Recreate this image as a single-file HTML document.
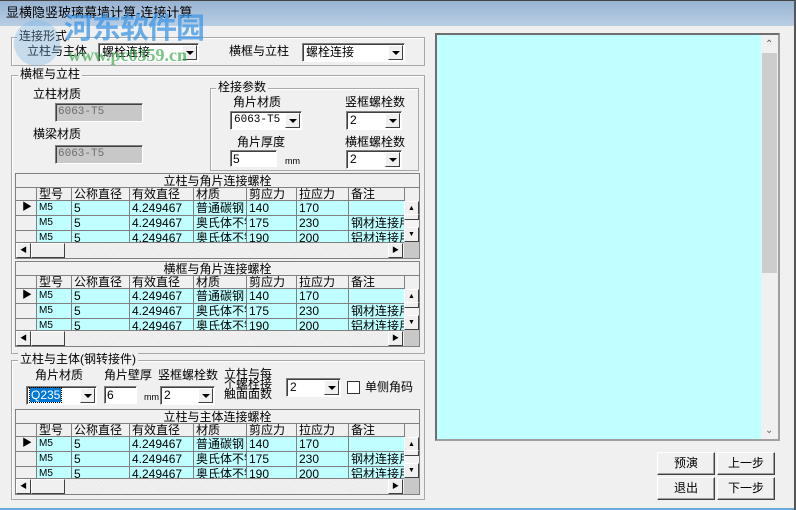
<!DOCTYPE html>
<html><head><meta charset="utf-8"><style>
*{box-sizing:border-box;margin:0;padding:0}
body{width:796px;height:510px;overflow:hidden;background:#f0f0f0;font-family:"Liberation Sans","WenQuanYi Zen Hei","Noto Sans CJK SC",sans-serif;font-size:12px;color:#000;position:relative}
.a{position:absolute;white-space:nowrap;line-height:13px}
.title{left:0;top:0;width:796px;height:26px;background:linear-gradient(#98b4d2,#b8cde4);border-top:1px solid #444;border-right:1px solid #333}
.grp{position:absolute;border:1px solid #a8a8a8;box-shadow:inset 1px 1px 0 #fff}
.gl{position:absolute;background:#f0f0f0;padding:0 2px;line-height:13px;white-space:nowrap}
.combo{position:absolute;background:#fff;border:1px solid;border-color:#808080 #fff #fff #808080;box-shadow:inset 1px 1px 0 #404040;padding:1px 3px;line-height:14px;font-size:12px}
.combo .btn{position:absolute;right:1px;top:1px;bottom:1px;width:15px;background:#f0f0f0;border:1px solid;border-color:#fff #404040 #404040 #fff}
.combo .btn:after{content:"";position:absolute;left:3px;top:5px;border:4px solid transparent;border-top:4px solid #000;border-bottom:0}
.tb{position:absolute;background:#fff;border:1px solid;border-color:#808080 #fff #fff #808080;box-shadow:inset 1px 1px 0 #404040;padding:1px 2px;line-height:14px}
.dis{background:#c8c8c8;color:#6d6d6d;font-family:"Liberation Mono",monospace;font-size:11px}
.grid{position:absolute;width:405px;height:86px;border:1px solid #808080;background:#f0f0f0;overflow:hidden}
.cap{position:absolute;left:0;top:0;width:403px;height:14px;text-align:center;line-height:14px;border-bottom:1px solid #808080}
.c{position:absolute;height:15px;border-right:1px solid #808080;border-bottom:1px solid #808080;line-height:14px;padding-left:2px;overflow:hidden;white-space:nowrap;font-size:12px}
.h{height:13px;line-height:12px;top:14px}
.cy{background:#c0ffff}
.vs{position:absolute;left:388px;top:27px;width:15px;height:41px;background:#f4f4f4}
.sb{position:absolute;background:#f0f0f0;border:1px solid;border-color:#fff #404040 #404040 #fff;width:15px;height:15px}
.hs{position:absolute;left:0;top:68px;width:388px;height:16px;background:repeating-linear-gradient(45deg,#f4f4f4 0 1px,#e8e8e8 1px 2px);border-top:1px solid #808080}
.corner{position:absolute;left:388px;top:68px;width:16px;height:17px;background:#c8c8c8}
.btn2{position:absolute;width:58px;height:23px;background:#f0f0f0;border:1px solid;border-color:#fff #404040 #404040 #fff;box-shadow:inset -1px -1px 0 #a0a0a0;text-align:center;line-height:21px}
</style></head><body>
<div class="a title"></div>
<div class="a" style="left:6px;top:6px;font-size:13px">显横隐竖玻璃幕墙计算-连接计算</div>
<div class="a" style="left:0;top:508px;width:796px;height:2px;background:#6aa8d8"></div>
<div class="a" style="left:794px;top:0;width:2px;height:510px;background:#555"></div>

<div class="grp" style="left:11px;top:37px;width:414px;height:29px"></div>
<div class="gl" style="left:17px;top:30px">连接形式</div>
<div class="a" style="left:27px;top:45px">立柱与主体</div>
<div class="combo" style="left:98px;top:43px;width:101px;height:19px">螺栓连接<div class="btn"></div></div>
<div class="a" style="left:229px;top:45px">横框与立柱</div>
<div class="combo" style="left:302px;top:43px;width:103px;height:19px">螺栓连接<div class="btn"></div></div>

<div class="grp" style="left:11px;top:75px;width:414px;height:279px"></div>
<div class="gl" style="left:18px;top:68px">横框与立柱</div>
<div class="a" style="left:33px;top:88px">立柱材质</div>
<div class="tb dis" style="left:55px;top:103px;width:88px;height:19px">6063-T5</div>
<div class="a" style="left:33px;top:128px">横梁材质</div>
<div class="tb dis" style="left:55px;top:145px;width:88px;height:19px">6063-T5</div>

<div class="grp" style="left:210px;top:88px;width:209px;height:83px"></div>
<div class="gl" style="left:216px;top:81px">栓接参数</div>
<div class="a" style="left:233px;top:96px">角片材质</div>
<div class="combo" style="left:230px;top:111px;width:72px;height:19px;font-family:'Liberation Mono',monospace;font-size:11px">6063-T5<div class="btn"></div></div>
<div class="a" style="left:345px;top:96px">竖框螺栓数</div>
<div class="combo" style="left:346px;top:111px;width:56px;height:19px">2<div class="btn"></div></div>
<div class="a" style="left:237px;top:136px">角片厚度</div>
<div class="tb" style="left:230px;top:150px;width:47px;height:17px">5</div>
<div class="a" style="left:285px;top:155px;font-size:9px">mm</div>
<div class="a" style="left:345px;top:136px">横框螺栓数</div>
<div class="combo" style="left:346px;top:150px;width:56px;height:19px">2<div class="btn"></div></div>

<div class="grid" style="left:15px;top:173px">
<div class="cap">立柱与角片连接螺栓</div>
<div class="c h" style="left:0;width:21px"></div><div class="c h" style="left:21px;width:35px">型号</div><div class="c h" style="left:56px;width:58px">公称直径</div><div class="c h" style="left:114px;width:64px">有效直径</div><div class="c h" style="left:178px;width:53px">材质</div><div class="c h" style="left:231px;width:50px">剪应力</div><div class="c h" style="left:281px;width:52px">拉应力</div><div class="c h" style="left:333px;width:56px">备注</div>
<div class="c" style="left:0;top:27px;width:21px;text-align:center;font-size:10px">▶</div><div class="c cy" style="left:21px;top:27px;width:35px;font-size:10px">M5</div><div class="c cy" style="left:56px;top:27px;width:58px">5</div><div class="c cy" style="left:114px;top:27px;width:64px">4.249467</div><div class="c cy" style="left:178px;top:27px;width:53px">普通碳钢</div><div class="c cy" style="left:231px;top:27px;width:50px">140</div><div class="c cy" style="left:281px;top:27px;width:52px">170</div><div class="c cy" style="left:333px;top:27px;width:56px"></div>
<div class="c" style="left:0;top:42px;width:21px"></div><div class="c cy" style="left:21px;top:42px;width:35px;font-size:10px">M5</div><div class="c cy" style="left:56px;top:42px;width:58px">5</div><div class="c cy" style="left:114px;top:42px;width:64px">4.249467</div><div class="c cy" style="left:178px;top:42px;width:53px">奥氏体不锈</div><div class="c cy" style="left:231px;top:42px;width:50px">175</div><div class="c cy" style="left:281px;top:42px;width:52px">230</div><div class="c cy" style="left:333px;top:42px;width:56px">钢材连接用</div>
<div class="c" style="left:0;top:57px;width:21px"></div><div class="c cy" style="left:21px;top:57px;width:35px;font-size:10px">M5</div><div class="c cy" style="left:56px;top:57px;width:58px">5</div><div class="c cy" style="left:114px;top:57px;width:64px">4.249467</div><div class="c cy" style="left:178px;top:57px;width:53px">奥氏体不锈</div><div class="c cy" style="left:231px;top:57px;width:50px">190</div><div class="c cy" style="left:281px;top:57px;width:52px">200</div><div class="c cy" style="left:333px;top:57px;width:56px">铝材连接用</div>
<div class="vs"><div class="sb" style="left:0;top:0;font-size:7px;text-align:center;line-height:13px">▲</div><div class="sb" style="left:0;top:13px;height:6px"></div><div class="sb" style="left:0;top:26px;font-size:7px;text-align:center;line-height:13px">▼</div></div>
<div class="hs"><div class="sb" style="left:0;top:0;font-size:7px;text-align:center;line-height:13px">◀</div><div class="sb" style="left:15px;top:0;width:34px"></div><div class="sb" style="left:372px;top:0;font-size:7px;text-align:center;line-height:13px">▶</div></div>
<div class="corner"></div>
</div>

<div class="grid" style="left:15px;top:261px">
<div class="cap">横框与角片连接螺栓</div>
<div class="c h" style="left:0;width:21px"></div><div class="c h" style="left:21px;width:35px">型号</div><div class="c h" style="left:56px;width:58px">公称直径</div><div class="c h" style="left:114px;width:64px">有效直径</div><div class="c h" style="left:178px;width:53px">材质</div><div class="c h" style="left:231px;width:50px">剪应力</div><div class="c h" style="left:281px;width:52px">拉应力</div><div class="c h" style="left:333px;width:56px">备注</div>
<div class="c" style="left:0;top:27px;width:21px;text-align:center;font-size:10px">▶</div><div class="c cy" style="left:21px;top:27px;width:35px;font-size:10px">M5</div><div class="c cy" style="left:56px;top:27px;width:58px">5</div><div class="c cy" style="left:114px;top:27px;width:64px">4.249467</div><div class="c cy" style="left:178px;top:27px;width:53px">普通碳钢</div><div class="c cy" style="left:231px;top:27px;width:50px">140</div><div class="c cy" style="left:281px;top:27px;width:52px">170</div><div class="c cy" style="left:333px;top:27px;width:56px"></div>
<div class="c" style="left:0;top:42px;width:21px"></div><div class="c cy" style="left:21px;top:42px;width:35px;font-size:10px">M5</div><div class="c cy" style="left:56px;top:42px;width:58px">5</div><div class="c cy" style="left:114px;top:42px;width:64px">4.249467</div><div class="c cy" style="left:178px;top:42px;width:53px">奥氏体不锈</div><div class="c cy" style="left:231px;top:42px;width:50px">175</div><div class="c cy" style="left:281px;top:42px;width:52px">230</div><div class="c cy" style="left:333px;top:42px;width:56px">钢材连接用</div>
<div class="c" style="left:0;top:57px;width:21px"></div><div class="c cy" style="left:21px;top:57px;width:35px;font-size:10px">M5</div><div class="c cy" style="left:56px;top:57px;width:58px">5</div><div class="c cy" style="left:114px;top:57px;width:64px">4.249467</div><div class="c cy" style="left:178px;top:57px;width:53px">奥氏体不锈</div><div class="c cy" style="left:231px;top:57px;width:50px">190</div><div class="c cy" style="left:281px;top:57px;width:52px">200</div><div class="c cy" style="left:333px;top:57px;width:56px">铝材连接用</div>
<div class="vs"><div class="sb" style="left:0;top:0;font-size:7px;text-align:center;line-height:13px">▲</div><div class="sb" style="left:0;top:13px;height:6px"></div><div class="sb" style="left:0;top:26px;font-size:7px;text-align:center;line-height:13px">▼</div></div>
<div class="hs"><div class="sb" style="left:0;top:0;font-size:7px;text-align:center;line-height:13px">◀</div><div class="sb" style="left:15px;top:0;width:34px"></div><div class="sb" style="left:372px;top:0;font-size:7px;text-align:center;line-height:13px">▶</div></div>
<div class="corner"></div>
</div>

<div class="grp" style="left:11px;top:360px;width:414px;height:140px"></div>
<div class="gl" style="left:18px;top:353px">立柱与主体(钢转接件)</div>
<div class="a" style="left:35px;top:369px">角片材质</div>
<div class="combo" style="left:26px;top:386px;width:71px;height:19px"><span style="background:#0078d7;color:#fff;outline:1px dotted #000;padding:0 1px">Q235</span><div class="btn"></div></div>
<div class="a" style="left:104px;top:369px">角片壁厚</div>
<div class="tb" style="left:104px;top:386px;width:33px;height:18px">6</div>
<div class="a" style="left:144px;top:391px;font-size:9px">mm</div>
<div class="a" style="left:158px;top:369px">竖框螺栓数</div>
<div class="combo" style="left:160px;top:386px;width:55px;height:19px">2<div class="btn"></div></div>
<div class="a" style="left:224px;top:369px;line-height:10px">立柱与每<br>个螺栓接<br>触面面数</div>
<div class="combo" style="left:286px;top:378px;width:55px;height:19px">2<div class="btn"></div></div>
<div class="a" style="left:347px;top:381px;width:13px;height:13px;background:#fff;border:1px solid #333"></div>
<div class="a" style="left:365px;top:381px">单侧角码</div>

<div class="grid" style="left:15px;top:409px">
<div class="cap">立柱与主体连接螺栓</div>
<div class="c h" style="left:0;width:21px"></div><div class="c h" style="left:21px;width:35px">型号</div><div class="c h" style="left:56px;width:58px">公称直径</div><div class="c h" style="left:114px;width:64px">有效直径</div><div class="c h" style="left:178px;width:53px">材质</div><div class="c h" style="left:231px;width:50px">剪应力</div><div class="c h" style="left:281px;width:52px">拉应力</div><div class="c h" style="left:333px;width:56px">备注</div>
<div class="c" style="left:0;top:27px;width:21px;text-align:center;font-size:10px">▶</div><div class="c cy" style="left:21px;top:27px;width:35px;font-size:10px">M5</div><div class="c cy" style="left:56px;top:27px;width:58px">5</div><div class="c cy" style="left:114px;top:27px;width:64px">4.249467</div><div class="c cy" style="left:178px;top:27px;width:53px">普通碳钢</div><div class="c cy" style="left:231px;top:27px;width:50px">140</div><div class="c cy" style="left:281px;top:27px;width:52px">170</div><div class="c cy" style="left:333px;top:27px;width:56px"></div>
<div class="c" style="left:0;top:42px;width:21px"></div><div class="c cy" style="left:21px;top:42px;width:35px;font-size:10px">M5</div><div class="c cy" style="left:56px;top:42px;width:58px">5</div><div class="c cy" style="left:114px;top:42px;width:64px">4.249467</div><div class="c cy" style="left:178px;top:42px;width:53px">奥氏体不锈</div><div class="c cy" style="left:231px;top:42px;width:50px">175</div><div class="c cy" style="left:281px;top:42px;width:52px">230</div><div class="c cy" style="left:333px;top:42px;width:56px">钢材连接用</div>
<div class="c" style="left:0;top:57px;width:21px"></div><div class="c cy" style="left:21px;top:57px;width:35px;font-size:10px">M5</div><div class="c cy" style="left:56px;top:57px;width:58px">5</div><div class="c cy" style="left:114px;top:57px;width:64px">4.249467</div><div class="c cy" style="left:178px;top:57px;width:53px">奥氏体不锈</div><div class="c cy" style="left:231px;top:57px;width:50px">190</div><div class="c cy" style="left:281px;top:57px;width:52px">200</div><div class="c cy" style="left:333px;top:57px;width:56px">铝材连接用</div>
<div class="vs"><div class="sb" style="left:0;top:0;font-size:7px;text-align:center;line-height:13px">▲</div><div class="sb" style="left:0;top:13px;height:6px"></div><div class="sb" style="left:0;top:26px;font-size:7px;text-align:center;line-height:13px">▼</div></div>
<div class="hs"><div class="sb" style="left:0;top:0;font-size:7px;text-align:center;line-height:13px">◀</div><div class="sb" style="left:15px;top:0;width:34px"></div><div class="sb" style="left:372px;top:0;font-size:7px;text-align:center;line-height:13px">▶</div></div>
<div class="corner"></div>
</div>

<div class="a" style="left:435px;top:33px;width:345px;height:408px;border:2px solid #6e6e6e;border-right-color:#a0a0a0;border-bottom-color:#a0a0a0;background:#c0ffff"></div>
<div class="a" style="left:761px;top:35px;width:17px;height:404px;background:#f0f0f0"></div>
<div class="a" style="left:762px;top:53px;width:15px;height:220px;background:#cdcdcd"></div>
<div class="a" style="left:765px;top:38px;font-size:10px;color:#606060">⌃</div>
<div class="a" style="left:765px;top:424px;font-size:10px;color:#606060">⌄</div>

<div class="btn2" style="left:657px;top:452px">预演</div>
<div class="btn2" style="left:717px;top:452px">上一步</div>
<div class="btn2" style="left:657px;top:477px">退出</div>
<div class="btn2" style="left:717px;top:477px">下一步</div>

<div class="a" style="left:14px;top:20px;width:46px;height:46px;border-radius:50%;background:rgba(120,180,230,0.35)"></div>
<div class="a" style="left:64px;top:12px;font-size:29px;line-height:34px;font-weight:bold;color:rgba(60,150,230,0.75);letter-spacing:-1px">河东软件园</div>
<div class="a" style="left:68px;top:46px;font-size:18px;line-height:18px;font-weight:bold;font-family:'Liberation Serif',serif;color:rgba(60,170,80,0.7)">www.pc0359.cn</div>
</body></html>
